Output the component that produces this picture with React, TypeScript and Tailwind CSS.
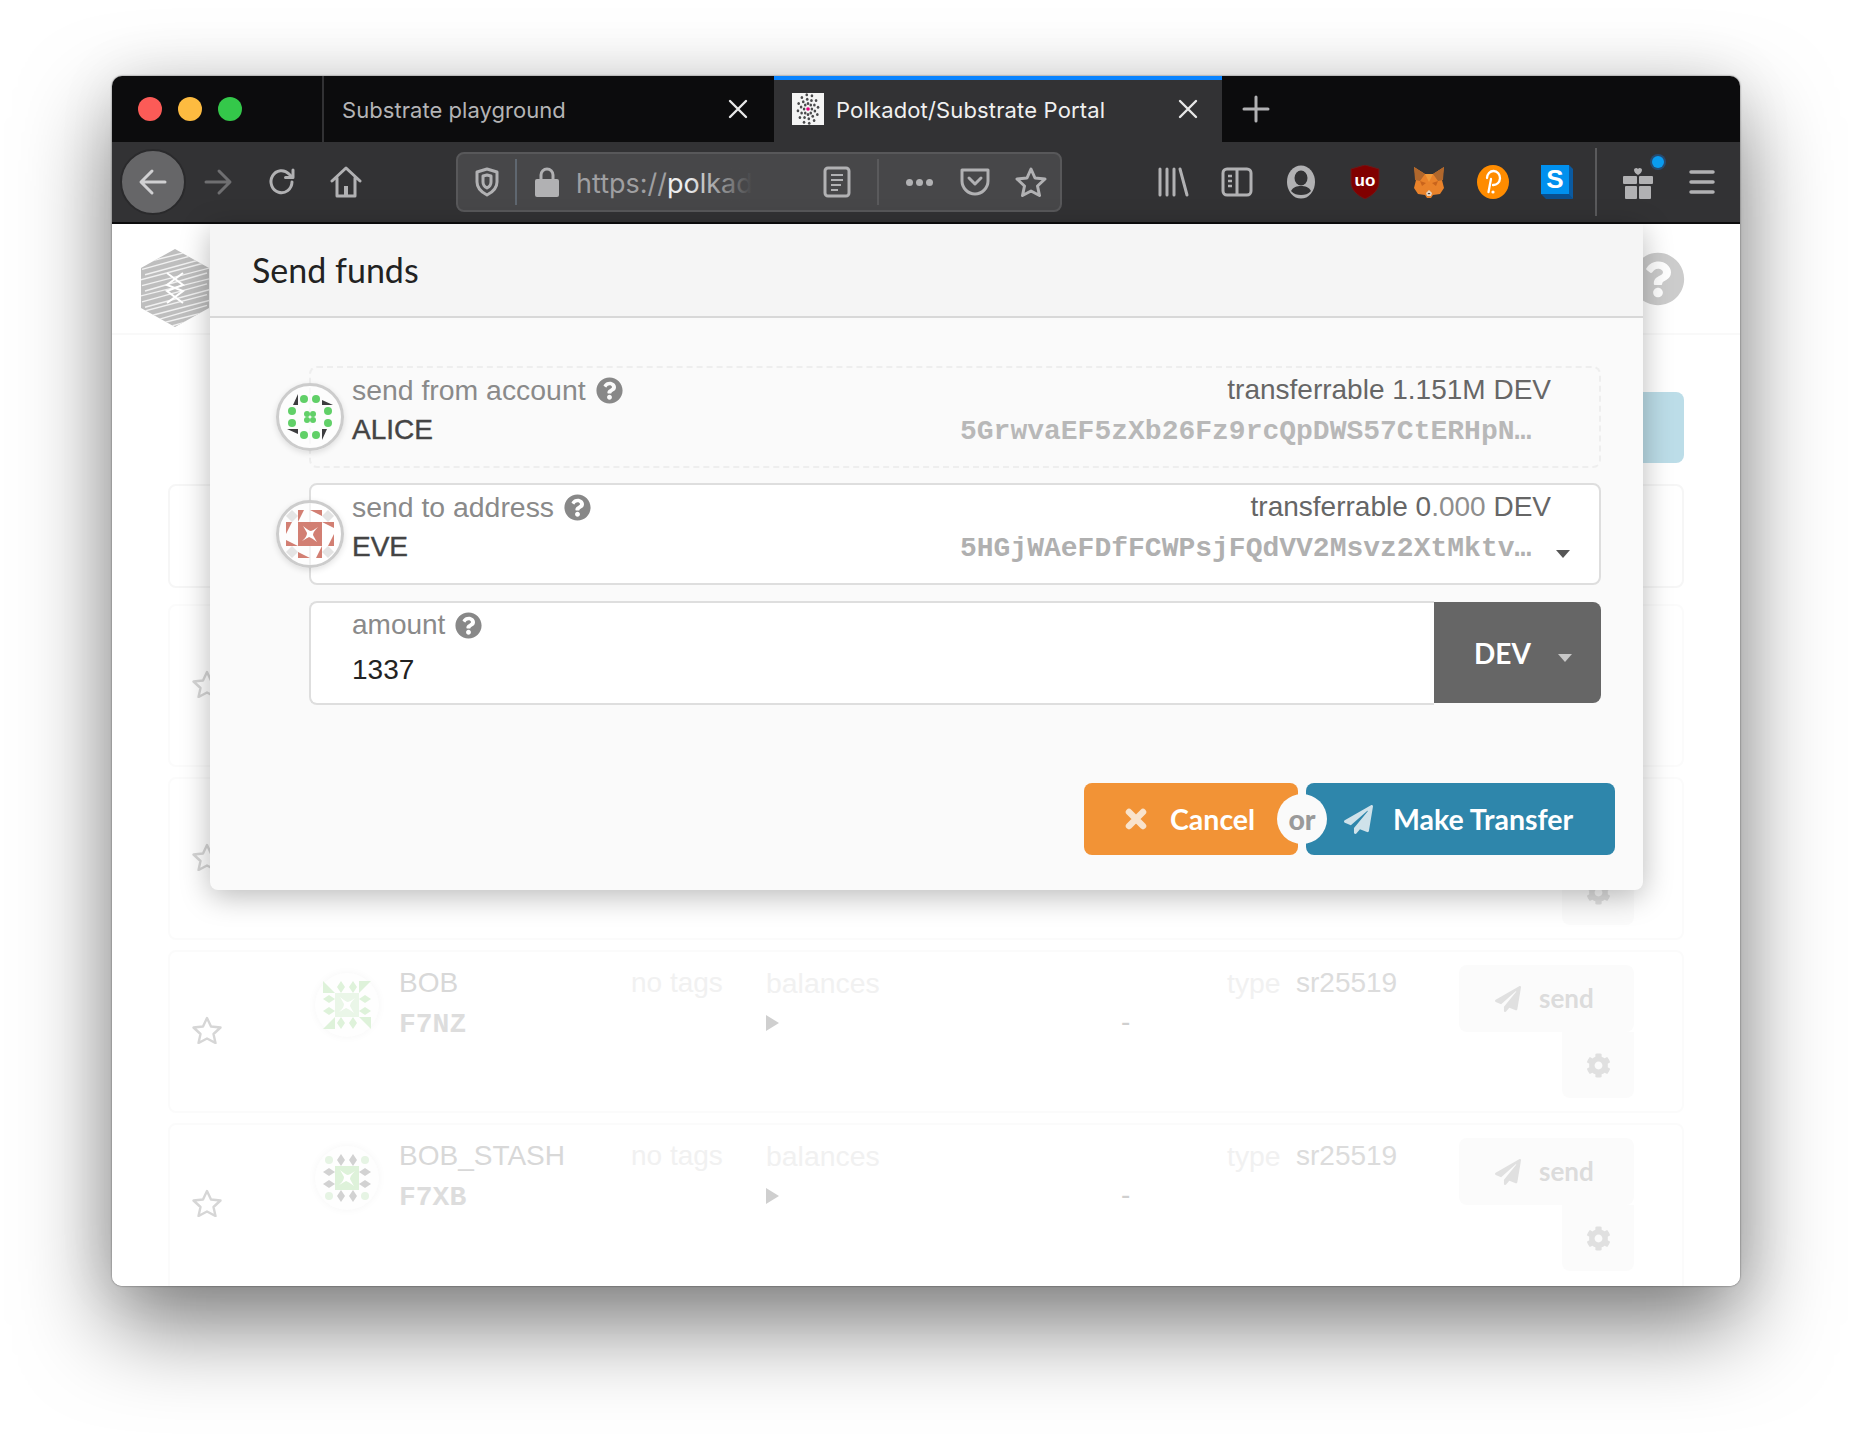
import { FaCog, FaPaperPlane, FaQuestionCircle } from "react-icons/fa";

const ICON = "#b1b1b3";
const SANS = "font-['Liberation_Sans',sans-serif]";
const MONO = "font-['Liberation_Mono',monospace]";

function Slot({ children }: { children: React.ReactNode }) {
  return <div className="flex h-16 w-16 shrink-0 items-center justify-center">{children}</div>;
}

function Close() {
  return (
    <svg width="20" height="20" viewBox="0 0 20 20" stroke="#e8e8e8" strokeWidth="2.4" strokeLinecap="round">
      <path d="M2 2l16 16M18 2L2 18" />
    </svg>
  );
}

function Favicon() {
  const dots: React.ReactNode[] = [];
  [5, 9, 13].forEach((r, i) => {
    const n = 8 + i * 2;
    for (let k = 0; k < n; k++) {
      const a = (k / n) * Math.PI * 2 + i * 0.2;
      dots.push(<ellipse key={`${i}-${k}`} cx={16 + Math.cos(a) * r * 0.78} cy={16 + Math.sin(a) * r * 1.1} rx="1.3" ry="1.5" fill="#4a4a4c" />);
    }
  });
  return (
    <svg width="32" height="32" viewBox="0 0 32 32" className="mr-3 shrink-0">
      <rect width="32" height="32" fill="#f4f4f4" />
      {dots}
      <circle cx="16" cy="16" r="1.8" fill="#e6007a" />
    </svg>
  );
}

function Pocket() {
  return (
    <svg width="32" height="30" viewBox="0 0 32 30" fill="none" stroke={ICON} strokeWidth="3" strokeLinejoin="round" strokeLinecap="round">
      <path d="M3 3h26v11c0 7-6 13-13 13S3 21 3 14z" />
      <path d="M10 11l6 6 6-6" />
    </svg>
  );
}

function Fox() {
  return (
    <svg width="32" height="32" viewBox="0 0 32 32">
      <path d="M1 1l11 7h8l11-7-2 13 2 8-4 6-7 1-2 3h-4l-2-3-7-1-4-6 2-8z" fill="#e9822a" />
      <path d="M1 1l11 7-5 7-5-1zM31 1L20 8l5 7 5-1z" fill="#b0672c" />
      <path d="M12 8h8l-4 8z" fill="#f19a3a" />
      <path d="M7 15l6 2-4 3zM25 15l-6 2 4 3z" fill="#c9641c" />
      <path d="M13 27l3-3 3 3-1 3h-4z" fill="#e6d5c4" />
      <path d="M14.500 27h3l-1.500 1.500z" fill="#333" />
    </svg>
  );
}

function Gift() {
  return (
    <div className="relative">
      <svg width="32" height="34" viewBox="0 0 32 34" fill={ICON}>
        <path d="M16 10c-2-1-4-3-4-5 0-2 3-3 4-1 1-2 4-1 4 1 0 2-2 4-4 5z" />
        <rect x="1" y="11" width="14" height="8" rx="1" />
        <rect x="17" y="11" width="14" height="8" rx="1" />
        <rect x="3" y="21" width="12" height="13" rx="1" />
        <rect x="17" y="21" width="12" height="13" rx="1" />
      </svg>
      <span className="absolute right-[-10px] top-[-9px] h-3 w-3 rounded-full bg-[#0a9cf0] shadow-[0_0_0_2px_rgba(10,132,255,0.3)]" />
    </div>
  );
}

function Toolbar() {
  return (
    <div className="flex h-[80px] items-center bg-[#323234]">
      <div className="ml-2 flex h-[66px] w-[66px] shrink-0 items-center justify-center rounded-full border-2 border-[#2a2a2c] bg-[#666668]">
        <svg width="30" height="30" viewBox="0 0 30 30" fill="none" stroke="#d0d0d2" strokeWidth="3" strokeLinecap="round" strokeLinejoin="round">
          <path d="M27 15H4M14 4L3 15l11 11" />
        </svg>
      </div>
      <Slot>
        <svg width="30" height="30" viewBox="0 0 30 30" fill="none" stroke="#6f6f71" strokeWidth="3" strokeLinecap="round" strokeLinejoin="round">
          <path d="M3 15h23M16 4l11 11-11 11" />
        </svg>
      </Slot>
      <Slot>
        <svg width="30" height="30" viewBox="0 0 30 30" fill="none" stroke={ICON} strokeWidth="3" strokeLinecap="round" strokeLinejoin="round">
          <path d="M25 15a10.500 11 0 1 1-3-8l3 3" />
          <path d="M26 3v7.500h-7.500" />
        </svg>
      </Slot>
      <Slot>
        <svg width="32" height="32" viewBox="0 0 32 32" fill="none" stroke={ICON} strokeWidth="3" strokeLinecap="round" strokeLinejoin="round">
          <path d="M2 15L16 2l14 13M7 12v18h18V12" />
          <rect x="14" y="20" width="4" height="10" fill={ICON} stroke="none" />
        </svg>
      </Slot>
      <div className="ml-[78px] flex h-[60px] w-[606px] shrink-0 items-center rounded-lg border-2 border-[#58585a] bg-[#474749]">
        <div className="flex w-[57px] justify-center">
          <svg width="26" height="30" viewBox="0 0 26 30" fill="none" stroke={ICON} strokeWidth="3" strokeLinejoin="round">
            <path d="M13 2l10 3v10c0 6-4 10-10 13C7 25 3 21 3 15V5z" />
            <path d="M13 8l4 1v6c0 3-2 5-4 6-2-1-4-3-4-6V9z" />
          </svg>
        </div>
        <div className="h-[46px] w-[2px] bg-[#5f6770]" />
        <div className="flex w-[59px] justify-center">
          <svg width="26" height="30" viewBox="0 0 26 30" fill={ICON}>
            <path d="M7 13V8a6 6 0 0 1 12 0v5" fill="none" stroke={ICON} strokeWidth="3" />
            <rect x="1" y="12" width="24" height="18" rx="2" />
          </svg>
        </div>
        <div className="relative mt-[3px] w-[176px] whitespace-nowrap font-['Inter',sans-serif] text-[27px] leading-[40px] text-[#9f9fa1]">
          https://<span className="text-[#eeeeee]">polkad</span>
          <span className="absolute inset-y-0 right-0 w-16 bg-gradient-to-r from-transparent to-[#474749]" />
        </div>
        <div className="ml-[71px] flex w-7 justify-center">
          <svg width="28" height="32" viewBox="0 0 28 32" fill="none" stroke={ICON} strokeWidth="3">
            <rect x="2" y="2" width="24" height="28" rx="3" />
            <path d="M8 9h12M8 14h12M8 19h10M8 24h7" strokeWidth="2" />
          </svg>
        </div>
        <div className="ml-[26px] h-[46px] w-[2px] bg-[#5a5a5c]" />
        <div className="ml-6 flex w-[32px] justify-center gap-[3px]">
          <span className="h-[7px] w-[7px] rounded-full bg-[#b1b1b3]" />
          <span className="h-[7px] w-[7px] rounded-full bg-[#b1b1b3]" />
          <span className="h-[7px] w-[7px] rounded-full bg-[#b1b1b3]" />
        </div>
        <div className="ml-[24px] flex w-8 justify-center"><Pocket /></div>
        <div className="ml-[24px] flex w-8 justify-center">
          <svg width="32" height="32" viewBox="0 0 32 32" fill="none" stroke={ICON} strokeWidth="3" strokeLinejoin="round">
            <path d="M16 3l4 9 10 1-7.500 7 2 9.500L16 25l-8.500 4.500 2-9.500L2 13l10-1z" />
          </svg>
        </div>
      </div>
      <div className="ml-[79px] flex">
        <Slot>
          <svg width="32" height="30" viewBox="0 0 32 30" stroke={ICON} strokeWidth="3" strokeLinecap="round">
            <path d="M3 2v26M10 2v26M17 2v26M23 2l7 26" />
          </svg>
        </Slot>
        <Slot>
          <svg width="32" height="32" viewBox="0 0 32 32" fill="none" stroke={ICON} strokeWidth="3">
            <rect x="2" y="3" width="28" height="26" rx="4" />
            <path d="M16 3v26" />
            <path d="M7 10h4M7 15h4M7 20h4" strokeWidth="2.500" />
          </svg>
        </Slot>
        <Slot>
          <svg width="30" height="34" viewBox="0 0 30 34">
            <ellipse cx="15" cy="17" rx="14" ry="16.500" fill={ICON} />
            <ellipse cx="15" cy="13" rx="6.500" ry="7.500" fill="#323234" />
            <path d="M5 26c2-4 6-5 10-5s8 1 10 5c-3 3-6 4-10 4s-7-1-10-4z" fill="#323234" />
          </svg>
        </Slot>
        <Slot>
          <svg width="30" height="34" viewBox="0 0 30 34">
            <path d="M15 0l14 4v13c0 8-6 13-14 17C7 30 1 25 1 17V4z" fill="#800000" stroke="#6b1a1a" />
            <text x="15" y="21" textAnchor="middle" fill="#fff" fontSize="17" fontWeight="700" fontFamily="Liberation Sans">uo</text>
          </svg>
        </Slot>
        <Slot><Fox /></Slot>
        <Slot>
          <svg width="32" height="34" viewBox="0 0 32 34">
            <ellipse cx="16" cy="17" rx="16" ry="17" fill="#ff8c00" />
            <path d="M10 13a6.500 7 0 1 1 6 7" fill="none" stroke="#fff" strokeWidth="2.300" strokeLinecap="round" />
            <path d="M14 14l-2.500 13" fill="none" stroke="#fff" strokeWidth="2.300" strokeLinecap="round" />
            <circle cx="16" cy="27" r="1.600" fill="#fff" />
          </svg>
        </Slot>
        <Slot>
          <svg width="32" height="34" viewBox="0 0 32 34">
            <path d="M28 0l4 4v30l-5-4z" fill="#0a5aa0" />
            <path d="M0 29l28 0 4 5H5z" fill="#0a4f8e" />
            <rect width="28" height="29" fill="#0090ee" />
            <text x="14" y="23" textAnchor="middle" fill="#fff" fontSize="26" fontWeight="700" fontFamily="Liberation Sans">S</text>
          </svg>
        </Slot>
      </div>
      <div className="ml-[6px] mr-[9px] h-[68px] w-[2px] bg-[#5a5a5c]" />
      <Slot><Gift /></Slot>
      <Slot>
        <svg width="26" height="26" viewBox="0 0 26 26" stroke={ICON} strokeWidth="3.500" strokeLinecap="round">
          <path d="M2 3h22M2 13h22M2 23h22" />
        </svg>
      </Slot>
    </div>
  );
}

function Chrome() {
  return (
    <>
      <div className="flex h-[66px] items-stretch bg-[#0c0c0d]">
        <div className="ml-[26px] flex items-center gap-4">
          <span className="h-6 w-6 rounded-full bg-[#fc5b57]" />
          <span className="h-6 w-6 rounded-full bg-[#fdbb40]" />
          <span className="h-6 w-6 rounded-full bg-[#34c84a]" />
        </div>
        <div className="ml-20 flex w-[452px] items-center border-l-2 border-[#323234] pl-[18px] pr-[26px] font-['Inter',sans-serif] text-[22px] text-[#b4b4b6]">
          <span className="mt-[3px] flex-1 tracking-[0.05px]">Substrate playground</span>
          <Close />
        </div>
        <div className="flex w-[448px] items-center border-t-4 border-[#0a84ff] bg-[#323234] pb-[4px] pl-[18px] pr-6 font-['Inter',sans-serif] text-[22px] text-[#f0f0f0]">
          <Favicon />
          <span className="mt-[3px] flex-1 tracking-[0.15px]">Polkadot/Substrate Portal</span>
          <Close />
        </div>
        <div className="flex w-[68px] items-center justify-center">
          <svg width="28" height="28" viewBox="0 0 28 28" stroke={ICON} strokeWidth="3" strokeLinecap="round">
            <path d="M14 2v24M2 14h24" />
          </svg>
        </div>
      </div>
      <Toolbar />
      <div className="h-[2px] bg-[#0c0c0d]" />
    </>
  );
}

function HexLogo() {
  const stripes = [];
  for (let i = 0; i < 15; i++) {
    const y = 6 + i * 5.4;
    stripes.push(<path key={i} d={`M${-2 + (i % 3) * 3} ${y + 9}L${70 - (i % 2) * 4} ${y - 9}`} />);
  }
  return (
    <svg width="68" height="78" viewBox="0 0 68 78" className="ml-[29px] mt-[18px] shrink-0">
      <clipPath id="hex"><path d="M34 0l34 19v40L34 78 0 59V19z" /></clipPath>
      <path d="M34 0l34 19v40L34 78 0 59V19z" fill="#bebebe" />
      <g clipPath="url(#hex)" stroke="#f1f1f1" strokeWidth="1.400">{stripes}</g>
      <path d="M26 24l16 12-16 6 16 12M42 24L26 36l16 6-16 12" fill="none" stroke="#fff" strokeWidth="2" />
    </svg>
  );
}

function Star4({ fill = "#fff" }: { fill?: string }) {
  return <path d="M-7 -8Q-1 -3 1 -3Q4 -4 8 -7Q3 -2 3 1Q4 3 7 8Q2 4 -1 3Q-3 4 -8 7Q-3 3 -3 -1Q-4 -3 -7 -8Z" fill={fill} />;
}

function Quarter({ children }: { children: React.ReactNode }) {
  return (
    <>
      {[0, 90, 180, 270].map((r) => (
        <g key={r} transform={`rotate(${r})`}>{children}</g>
      ))}
    </>
  );
}

// identicons, centre of the viewBox is the middle of the circle
function AliceIcon() {
  return (
    <svg width="60" height="60" viewBox="-30 -30 60 60">
      <Quarter>
        <circle cx="-6" cy="-18" r="4" fill="#61d068" />
        <circle cx="6" cy="-18" r="4" fill="#61d068" />
        <path d="M-17 -12h5v-11z" fill="#3d3d3f" />
        <circle cx="-3" cy="-3" r="3" fill="#61d068" />
      </Quarter>
    </svg>
  );
}

function EveIcon() {
  return (
    <svg width="60" height="60" viewBox="-30 -30 60 60">
      <Quarter>
        <path d="M-18 -24l6 6-6 6-6-6z" fill="#e4e4e4" />
        <path d="M-12 -24h6l-6 12z" fill="#d27f73" />
        <path d="M0 -24h12v6z" fill="#d27f73" />
      </Quarter>
      <rect x="-12" y="-12" width="24" height="24" fill="#d27f73" />
      <Star4 />
    </svg>
  );
}

function BobIcon() {
  return (
    <svg width="48" height="48" viewBox="-24 -24 48 48">
      <Quarter>
        <path d="M-6 -24l4 6-4 6-4-6zM6 -24l4 6-4 6-4-6z" fill="#def2da" />
        <path d="M-24 -24l12 12h-12z" fill="#def2da" />
      </Quarter>
      <rect x="-12" y="-12" width="24" height="24" fill="#eaf6e8" />
      <Star4 />
    </svg>
  );
}

function BobStashIcon() {
  return (
    <svg width="48" height="48" viewBox="-24 -24 48 48">
      <Quarter>
        <path d="M-6 -24l4 6-4 6-4-6zM6 -24l4 6-4 6-4-6z" fill="#d2d2d2" />
        <circle cx="-18" cy="-18" r="4" fill="#e6f4e4" />
      </Quarter>
      <rect x="-12" y="-12" width="24" height="24" fill="#def2da" />
      <Star4 />
    </svg>
  );
}

function Help() {
  return <FaQuestionCircle className="ml-[10px] inline-block text-[27px] text-[#888888]" />;
}

type RowProps = { name: string; id: string; icon?: React.ReactNode; last?: boolean };

function AccountRow({ name, id, icon, last }: RowProps) {
  return (
    <div className={`mt-[10px] flex shrink-0 items-start rounded-lg border-2 border-[#fbfbfb] ${last ? "h-[190px]" : "h-[163px]"} ${SANS} text-[28px] leading-[40px]`}>
      <svg width="30" height="28" viewBox="0 0 30 28" fill="none" stroke="#d6d6d6" strokeWidth="2.400" strokeLinejoin="round" className="ml-[22px] mt-[64px] shrink-0">
        <path d="M15 2l4 8.500 9.500 1-7 6.500 2 9L15 22.500 6.500 27l2-9-7-6.500 9.500-1z" />
      </svg>
      <div className="ml-[93px] mt-[21px] flex h-16 w-16 shrink-0 items-center justify-center rounded-full bg-[#fefefe] shadow-[0_0_8px_rgba(0,0,0,0.04)]">{icon}</div>
      <div className="ml-[20px] mt-[11px] w-[232px] shrink-0">
        <div className="text-[#d8d8d8]">{name}</div>
        <div className={`${MONO} mt-[2px] text-[28px] font-bold text-[#dddddd]`}>{id}</div>
      </div>
      <div className="mt-[11px] w-[135px] shrink-0 text-[#f1f1f1]">no tags</div>
      <div className="mt-[11px] w-[355px] shrink-0">
        <div className="text-[28.400px] text-[#f1f1f1]">balances</div>
        <svg width="13" height="16" viewBox="0 0 13 16" className="mt-[12px]"><path d="M0 0l13 8-13 8z" fill="#cfcfcf" /></svg>
      </div>
      <div className="mt-[50px] w-[106px] shrink-0 text-[#cfcfcf]">-</div>
      <div className="mt-[11px] w-[69px] shrink-0 text-[28.400px] text-[#f1f1f1]">type</div>
      <div className="mt-[11px] w-[163px] shrink-0 text-[#dcdcdc]">sr25519</div>
      <div className="mt-[13px] flex w-[175px] shrink-0 flex-col items-end">
        <div className="flex h-[67px] w-[175px] items-center gap-[18px] rounded-lg bg-[#fbfbfb] pl-[36px] font-['Lato',sans-serif] text-[26px] font-bold text-[#dcdcdc]">
          <FaPaperPlane className="text-[26px] text-[#e0e0e0]" />
          <span className="-mt-[2px]">send</span>
        </div>
        <div className="flex h-[66px] w-[72px] items-center justify-center rounded-b-lg bg-[#fbfbfb]">
          <FaCog className="text-[25px] text-[#e0e0e0]" />
        </div>
      </div>
    </div>
  );
}

function Page() {
  return (
    <div className="flex h-[1062px] flex-col overflow-hidden bg-white">
      <div className="flex h-[111px] shrink-0 items-center justify-between border-b-2 border-[#f9f9f9]">
        <HexLogo />
        <FaQuestionCircle className="mr-[55px] text-[54px] text-[#cccccc]" />
      </div>
      <div className="mx-[56px] flex flex-1 flex-col">
        <div className="mt-[57px] h-[71px] w-full shrink-0">
          <div className="ml-auto h-[71px] w-[400px] rounded-lg bg-[#bcdde8]" />
        </div>
        <div className="mt-[21px] h-[104px] shrink-0 rounded-lg border-2 border-[#f6f6f6]" />
        <div className="mt-[6px]" />
        <AccountRow name="ALICE" id="F7Hs" />
        <AccountRow name="ALICE_STASH" id="F7QQ" />
        <AccountRow name="BOB" id="F7NZ" icon={<BobIcon />} />
        <AccountRow name="BOB_STASH" id="F7XB" icon={<BobStashIcon />} last />
      </div>
    </div>
  );
}

function Avatar({ children }: { children: React.ReactNode }) {
  return (
    <div className="absolute left-[-35px] top-1/2 flex h-[68px] w-[68px] -translate-y-1/2 items-center justify-center rounded-full border-[3px] border-[#cccccc] bg-white/60 shadow-[0_2px_6px_rgba(0,0,0,0.12)]">
      {children}
    </div>
  );
}

function Modal() {
  return (
    <div className="absolute left-[98px] top-[148px] h-[666px] w-[1433px] rounded-b-lg bg-[#fafafa] shadow-[0_6px_30px_rgba(0,0,0,0.28)]">
      <div className="flex h-[94px] items-center border-b-2 border-[#d8d8d8] bg-[#f5f5f5] pb-[2px] pl-[42px] font-['Lato',sans-serif] text-[34px] text-[#222222]">
        Send funds
      </div>
      <div className={`ml-[99px] mr-[42px] flex flex-col pt-[48px] ${SANS} text-[28px] leading-[40px]`}>
        <div className="relative h-[102px] rounded-lg border-2 border-dashed border-[#eeeeee] pl-[41px] pr-[48px] pt-[2px]">
          <Avatar><AliceIcon /></Avatar>
          <div className="flex justify-between">
            <span className="flex items-center text-[28.400px] text-[#8a8a8a]">send from account<Help /></span>
            <span className="text-[#666666]">transferrable 1.151M DEV</span>
          </div>
          <div className="flex justify-between">
            <span className="text-[#444444] [-webkit-text-stroke:0.4px_#444444]">ALICE</span>
            <span className={`${MONO} mr-[18px] mt-[2px] w-[573px] whitespace-nowrap font-bold text-[#b8b8b8]`}>5GrwvaEF5zXb26Fz9rcQpDWS57CtERHpN…</span>
          </div>
        </div>
        <div className="relative mt-[15px] h-[102px] rounded-lg border-2 border-[#dedede] bg-white pl-[41px] pr-[48px] pt-[2px]">
          <Avatar><EveIcon /></Avatar>
          <div className="flex justify-between">
            <span className="flex items-center text-[28.400px] text-[#8a8a8a]">send to address<Help /></span>
            <span className="text-[#666666]">transferrable 0<span className="text-[#8e8e8e]">.000</span> DEV</span>
          </div>
          <div className="flex justify-between">
            <span className="text-[#444444] [-webkit-text-stroke:0.4px_#444444]">EVE</span>
            <span className={`${MONO} mr-[18px] mt-[2px] w-[573px] whitespace-nowrap font-bold text-[#b0b0b0]`}>5HGjWAeFDfFCWPsjFQdVV2Msvz2XtMktv…</span>
          </div>
          <span className="absolute right-[29px] top-[65px] h-0 w-0 border-x-[7px] border-t-[8px] border-x-transparent border-t-[#555555]" />
        </div>
        <div className="mt-[16px] flex h-[104px]">
          <div className="flex-1 rounded-l-lg border-2 border-r-0 border-[#dedede] bg-white pl-[41px] pt-[2px]">
            <div className="flex items-center text-[#8a8a8a]">amount<Help /></div>
            <div className="mt-[5px] text-[#222222]">1337</div>
          </div>
          <div className="mt-px flex h-[101px] w-[167px] items-center rounded-r-lg bg-[#666666] pl-[40px] font-['Lato',sans-serif] font-bold text-white">
            DEV
            <span className="ml-[27px] mt-[10px] h-0 w-0 border-x-[7px] border-t-[8px] border-x-transparent border-t-[#c8c8c8]" />
          </div>
        </div>
      </div>
      <div className="mr-[28px] mt-[78px] flex justify-end font-['Lato',sans-serif] text-[28.500px] font-bold text-white">
        <div className="relative flex">
          <div className="flex h-[72px] w-[214px] items-center rounded-lg bg-[#f29336] pl-[41px]">
            <svg width="22" height="22" viewBox="0 0 22 22" stroke="#f9e3cc" strokeWidth="6.500" strokeLinecap="round"><path d="M4 4l14 14M18 4L4 18" /></svg>
            <span className="ml-[23px]">Cancel</span>
          </div>
          <div className="ml-2 flex h-[72px] w-[309px] items-center rounded-lg bg-[#2e86ab] pl-[38px]">
            <FaPaperPlane className="text-[29px] text-[#cfe2ea]" />
            <span className="ml-[20px]">Make Transfer</span>
          </div>
          <div className="absolute left-[193px] top-[11px] flex h-[50px] w-[50px] items-center justify-center rounded-full bg-[#fafafa] font-black text-[#9a9a9a]">or</div>
        </div>
      </div>
    </div>
  );
}

export default function App() {
  return (
    <div className="min-h-[1434px] overflow-hidden bg-white pl-[112px] pt-[76px]">
      <div className="relative h-[1210px] w-[1628px] overflow-hidden rounded-[10px] shadow-[0_40px_90px_rgba(0,0,0,0.5),0_0_60px_rgba(0,0,0,0.08),0_0_2px_rgba(0,0,0,0.6)]">
        <Chrome />
        <Page />
        <Modal />
      </div>
    </div>
  );
}
